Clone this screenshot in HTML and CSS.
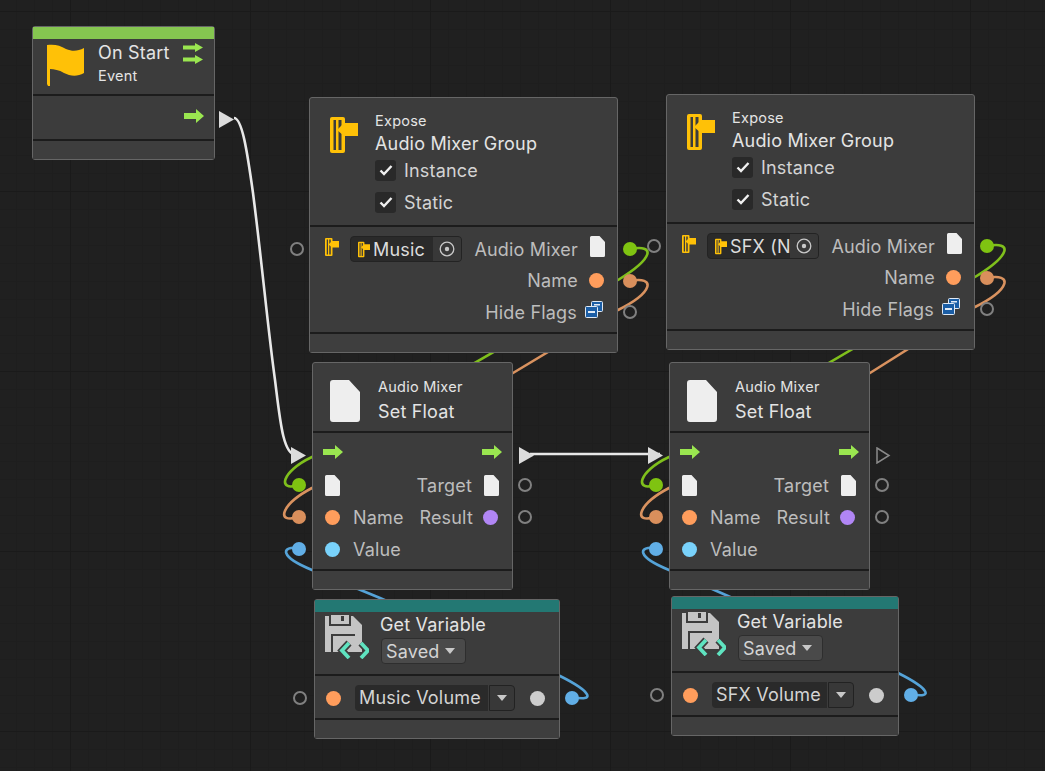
FILE: index.html
```html
<!DOCTYPE html>
<html lang="en">
<head>
    <meta charset="UTF-8">
    <meta name="viewport" content="width=device-width, initial-scale=1.0">
    <title>Script Graph</title>
    <link rel="stylesheet" href="styles.css">
</head>
<body>
    <svg class="icon-defs" width="0" height="0">
        <symbol id="i-flow" viewBox="0 0 20 14" preserveAspectRatio="none">
            <polygon points="0,4 12,4 12,0 20,7 12,14 12,10 0,10" fill="#9ae650"/>
        </symbol>
        <symbol id="i-doc" viewBox="0 0 15 21">
            <path d="M1.5 0H9.5L15 6V19.5A1.5 1.5 0 0 1 13.5 21H1.5A1.5 1.5 0 0 1 0 19.5V1.5A1.5 1.5 0 0 1 1.5 0Z" fill="#eeeeee"/>
        </symbol>
        <symbol id="i-flag" viewBox="0 0 40 44">
            <path d="M1 1C8 0 14 1 20 5C27 8 32 7 38 4V29C31 33 24 32 18 29C13 26 8 25 4 25V42H2L1 40Z" fill="#ffc107"/>
        </symbol>
        <symbol id="i-group" viewBox="0 0 28 36">
            <rect x="0" y="0" width="15" height="36" rx="2" fill="#ffc107"/>
            <rect x="3.5" y="3" width="2.5" height="30" fill="#3c3c3c"/>
            <rect x="8.5" y="3" width="3" height="30" fill="#3c3c3c"/>
            <polygon points="7,13 14,6 28,6 28,19 14,19" fill="#ffc107"/>
        </symbol>
        <symbol id="i-target" viewBox="0 0 16 16">
            <circle cx="8" cy="8" r="6.8" fill="none" stroke="#c8c8c8" stroke-width="1.3"/>
            <circle cx="8" cy="8" r="2.2" fill="#c8c8c8"/>
        </symbol>
        <symbol id="i-check" viewBox="0 0 14 12">
            <path d="M1.5 6.5L5 10L12.5 2" fill="none" stroke="#f0f0f0" stroke-width="2.4"/>
        </symbol>
        <symbol id="i-flags" viewBox="0 0 18 17">
            <rect x="6.5" y="0.5" width="11" height="10" rx="1" fill="#1b5ea6" stroke="#dfe9f5"/>
            <rect x="9" y="3" width="6" height="1.5" fill="#dfe9f5"/>
            <rect x="0.5" y="5.5" width="12" height="11" rx="1" fill="#1b5ea6" stroke="#dfe9f5"/>
            <rect x="3" y="10" width="7" height="2" fill="#dfe9f5"/>
        </symbol>
        <symbol id="i-save" viewBox="0 0 44 44">
            <path d="M0 1H28L37 10V37H0Z" fill="#c4c4c4"/>
            <rect x="4" y="0" width="22" height="11" fill="#3c3c3c"/>
            <rect x="6" y="0" width="18" height="9" fill="#c4c4c4"/>
            <rect x="16" y="1" width="3" height="5" fill="#3c3c3c"/>
            <rect x="6" y="19" width="24" height="18" fill="#3c3c3c"/>
            <rect x="8" y="21" width="22" height="16" fill="#c4c4c4"/>
            <path d="M24 28L17 35.5L24 43M36 28L43 35.5L36 43" fill="none" stroke="#3c3c3c" stroke-width="7"/>
            <path d="M24 28L17 35.5L24 43M36 28L43 35.5L36 43" fill="none" stroke="#5fe3c0" stroke-width="3.8"/>
        </symbol>
        <symbol id="i-tri" viewBox="0 0 15 17">
            <polygon points="0,0 15,8.5 0,17" fill="#dcdcdc"/>
        </symbol>
        <symbol id="i-tri-open" viewBox="0 0 15 17">
            <polygon points="1,1 13,8.5 1,16" fill="none" stroke="#8a8a8a" stroke-width="1.5"/>
        </symbol>
    </svg>

    <div class="canvas">
        <!-- connections, drawn under the nodes -->
        <svg class="wires" width="1045" height="771">
            <g class="wire-flow">
                <path d="M234 118C242 118 247 150 253 193C262 263 268 330 275 380C280 420 283 455 296 455"/>
                <path d="M530 454H660"/>
            </g>
            <g class="wire-green">
                <path d="M630 249C656 244 654 258 618 280L312 457C280 472 278 492 298 485"/>
                <path d="M987 246C1013 241 1011 255 975 277L669 457C637 472 635 492 655 485"/>
            </g>
            <g class="wire-orange">
                <path d="M630 281C656 276 654 292 618 310L513 373L312 488C280 505 276 524 298 517"/>
                <path d="M987 278C1013 273 1011 289 975 307L870 373L669 488C637 505 633 524 655 517"/>
            </g>
            <g class="wire-blue">
                <path d="M298 548C282 546 278 556 312 570L380 598L560 676C592 692 596 702 572 697"/>
                <path d="M655 548C639 546 635 556 669 570L728 596L898 673C930 689 934 699 911 694"/>
            </g>
        </svg>

        <!-- On Start -->
        <div class="node node-start">
            <div class="strip strip-green"></div>
            <div class="head head-start">
                <svg class="ic-flag"><use href="#i-flag"/></svg>
                <div class="head-text">
                    <div class="head-name name-start">On Start</div>
                    <div class="head-sub">Event</div>
                </div>
                <div class="start-arrows">
                    <svg class="ic-flow-sm"><use href="#i-flow"/></svg>
                    <svg class="ic-flow-sm"><use href="#i-flow"/></svg>
                </div>
            </div>
            <div class="body body-start">
                <div class="row">
                    <svg class="ic-flow push"><use href="#i-flow"/></svg>
                    <svg class="port-flow out-start"><use href="#i-tri"/></svg>
                </div>
            </div>
            <div class="foot"></div>
        </div>

        <!-- Expose: Music -->
        <div class="node node-expose node-expose-a">
            <div class="head head-expose">
                <svg class="ic-group"><use href="#i-group"/></svg>
                <div class="head-text">
                    <div class="head-sub">Expose</div>
                    <div class="head-name">Audio Mixer Group</div>
                    <div class="check"><span class="check-box"><svg class="ic-check"><use href="#i-check"/></svg></span>Instance</div>
                    <div class="check"><span class="check-box"><svg class="ic-check"><use href="#i-check"/></svg></span>Static</div>
                </div>
            </div>
            <div class="body body-expose">
                <div class="row row-expose">
                    <span class="port port-open in-expose"></span>
                    <svg class="ic-group-sm"><use href="#i-group"/></svg>
                    <div class="field-object">
                        <svg class="ic-group-xs"><use href="#i-group"/></svg>
                        <span class="field-label">Music</span>
                        <span class="field-target"><svg class="ic-target"><use href="#i-target"/></svg></span>
                    </div>
                    <span class="label push">Audio Mixer</span>
                    <svg class="ic-doc ic-doc-raised"><use href="#i-doc"/></svg>
                    <span class="port port-green out-expose"></span>
                </div>
                <div class="row row-expose">
                    <span class="label push">Name</span>
                    <span class="dot dot-orange"></span>
                    <span class="port port-orange out-expose"></span>
                </div>
                <div class="row row-expose">
                    <span class="label push">Hide Flags</span>
                    <svg class="ic-flags"><use href="#i-flags"/></svg>
                    <span class="port port-open out-expose"></span>
                </div>
            </div>
            <div class="foot"></div>
        </div>

        <!-- Expose: SFX -->
        <div class="node node-expose node-expose-b">
            <div class="head head-expose">
                <svg class="ic-group"><use href="#i-group"/></svg>
                <div class="head-text">
                    <div class="head-sub">Expose</div>
                    <div class="head-name">Audio Mixer Group</div>
                    <div class="check"><span class="check-box"><svg class="ic-check"><use href="#i-check"/></svg></span>Instance</div>
                    <div class="check"><span class="check-box"><svg class="ic-check"><use href="#i-check"/></svg></span>Static</div>
                </div>
            </div>
            <div class="body body-expose">
                <div class="row row-expose">
                    <span class="port port-open in-expose"></span>
                    <svg class="ic-group-sm"><use href="#i-group"/></svg>
                    <div class="field-object">
                        <svg class="ic-group-xs"><use href="#i-group"/></svg>
                        <span class="field-label">SFX (N</span>
                        <span class="field-target"><svg class="ic-target"><use href="#i-target"/></svg></span>
                    </div>
                    <span class="label push">Audio Mixer</span>
                    <svg class="ic-doc ic-doc-raised"><use href="#i-doc"/></svg>
                    <span class="port port-green out-expose"></span>
                </div>
                <div class="row row-expose">
                    <span class="label push">Name</span>
                    <span class="dot dot-orange"></span>
                    <span class="port port-orange out-expose"></span>
                </div>
                <div class="row row-expose">
                    <span class="label push">Hide Flags</span>
                    <svg class="ic-flags"><use href="#i-flags"/></svg>
                    <span class="port port-open out-expose"></span>
                </div>
            </div>
            <div class="foot"></div>
        </div>

        <!-- Set Float 1 -->
        <div class="node node-set node-set-a">
            <div class="head head-set">
                <svg class="ic-doc-lg"><use href="#i-doc"/></svg>
                <div class="head-text">
                    <div class="head-sub">Audio Mixer</div>
                    <div class="head-name">Set Float</div>
                </div>
            </div>
            <div class="body body-set">
                <div class="row">
                    <svg class="port-flow in-set"><use href="#i-tri"/></svg>
                    <svg class="ic-flow"><use href="#i-flow"/></svg>
                    <svg class="ic-flow push"><use href="#i-flow"/></svg>
                    <svg class="port-flow out-set"><use href="#i-tri"/></svg>
                </div>
                <div class="row">
                    <span class="port port-green in-set-dot"></span>
                    <svg class="ic-doc slot"><use href="#i-doc"/></svg>
                    <span class="label push">Target</span>
                    <svg class="ic-doc slot-r"><use href="#i-doc"/></svg>
                    <span class="port port-open out-set-dot"></span>
                </div>
                <div class="row">
                    <span class="port port-orange in-set-dot"></span>
                    <span class="dot dot-orange"></span>
                    <span class="label">Name</span>
                    <span class="label push">Result</span>
                    <span class="dot dot-purple"></span>
                    <span class="port port-open out-set-dot"></span>
                </div>
                <div class="row">
                    <span class="port port-blue in-set-dot"></span>
                    <span class="dot dot-blue"></span>
                    <span class="label">Value</span>
                </div>
            </div>
            <div class="foot"></div>
        </div>

        <!-- Set Float 2 -->
        <div class="node node-set node-set-b">
            <div class="head head-set">
                <svg class="ic-doc-lg"><use href="#i-doc"/></svg>
                <div class="head-text">
                    <div class="head-sub">Audio Mixer</div>
                    <div class="head-name">Set Float</div>
                </div>
            </div>
            <div class="body body-set">
                <div class="row">
                    <svg class="port-flow in-set"><use href="#i-tri"/></svg>
                    <svg class="ic-flow"><use href="#i-flow"/></svg>
                    <svg class="ic-flow push"><use href="#i-flow"/></svg>
                    <svg class="port-flow out-set"><use href="#i-tri-open"/></svg>
                </div>
                <div class="row">
                    <span class="port port-green in-set-dot"></span>
                    <svg class="ic-doc slot"><use href="#i-doc"/></svg>
                    <span class="label push">Target</span>
                    <svg class="ic-doc slot-r"><use href="#i-doc"/></svg>
                    <span class="port port-open out-set-dot"></span>
                </div>
                <div class="row">
                    <span class="port port-orange in-set-dot"></span>
                    <span class="dot dot-orange"></span>
                    <span class="label">Name</span>
                    <span class="label push">Result</span>
                    <span class="dot dot-purple"></span>
                    <span class="port port-open out-set-dot"></span>
                </div>
                <div class="row">
                    <span class="port port-blue in-set-dot"></span>
                    <span class="dot dot-blue"></span>
                    <span class="label">Value</span>
                </div>
            </div>
            <div class="foot"></div>
        </div>

        <!-- Get Variable: Music Volume -->
        <div class="node node-var node-var-a">
            <div class="strip strip-teal"></div>
            <div class="head head-var">
                <svg class="ic-save"><use href="#i-save"/></svg>
                <div class="head-text">
                    <div class="var-name">Get Variable</div>
                    <div class="drop">Saved<span class="caret"></span></div>
                </div>
            </div>
            <div class="body body-var">
                <div class="row">
                    <span class="port port-open in-var"></span>
                    <span class="dot dot-orange"></span>
                    <span class="var-field var-field-a">Music Volume</span>
                    <span class="var-btn"><span class="caret"></span></span>
                    <span class="dot dot-grey"></span>
                    <span class="port port-blue out-var"></span>
                </div>
            </div>
            <div class="foot"></div>
        </div>

        <!-- Get Variable: SFX Volume -->
        <div class="node node-var node-var-b">
            <div class="strip strip-teal"></div>
            <div class="head head-var">
                <svg class="ic-save"><use href="#i-save"/></svg>
                <div class="head-text">
                    <div class="var-name">Get Variable</div>
                    <div class="drop">Saved<span class="caret"></span></div>
                </div>
            </div>
            <div class="body body-var">
                <div class="row">
                    <span class="port port-open in-var"></span>
                    <span class="dot dot-orange"></span>
                    <span class="var-field var-field-b">SFX Volume</span>
                    <span class="var-btn"><span class="caret"></span></span>
                    <span class="dot dot-grey"></span>
                    <span class="port port-blue out-var"></span>
                </div>
            </div>
            <div class="foot"></div>
        </div>
    </div>
</body>
</html>
```

FILE: styles.css
```css
body {
    margin: 0;
    background-color: #202020;
    font-family: Inter, "Noto Sans", sans-serif;
    color: #e4e4e4;
    letter-spacing: 0.18px;
}
.icon-defs {
    position: absolute;
}
.canvas {
    position: relative;
    width: 1045px;
    height: 771px;
    overflow: hidden;
    background-color: #202020;
    background-image:
        linear-gradient(#1a1a1a 1px, transparent 1px),
        linear-gradient(90deg, #1a1a1a 1px, transparent 1px),
        linear-gradient(#1e1e1e 1px, transparent 1px),
        linear-gradient(90deg, #1e1e1e 1px, transparent 1px);
    background-size: 180px 180px, 180px 180px, 18px 18px, 18px 18px;
    background-position: 0 11px, 70px 0, 0 11px, 70px 0;
}
.wires {
    position: absolute;
    left: 0;
    top: 0;
}
.wires path {
    fill: none;
    stroke-width: 2.6;
}
.wire-flow path { stroke: #e8e8e8; }
.wire-green path { stroke: #7fbf1c; }
.wire-orange path { stroke: #d9925f; }
.wire-blue path { stroke: #55a3d8; }

/* nodes */
.node {
    position: absolute;
    box-sizing: border-box;
    display: flex;
    flex-direction: column;
    background-color: #3c3c3c;
    border: 1px solid #666;
    border-radius: 3px;
}
.node-start { left: 32px; top: 26px; width: 183px; height: 134px; }
.node-expose { width: 309px; height: 256px; }
.node-expose-a { left: 309px; top: 97px; }
.node-expose-b { left: 666px; top: 94px; }
.node-set { width: 201px; height: 228px; }
.node-set-a { left: 312px; top: 362px; }
.node-set-b { left: 669px; top: 362px; }
.node-var { height: 140px; }
.node-var-a { left: 314px; top: 599px; width: 246px; }
.node-var-b { left: 671px; top: 596px; width: 228px; }

.strip { height: 12px; }
.strip-green { background-color: #85c650; }
.strip-teal { background-color: #237873; }

.head {
    display: flex;
    box-sizing: border-box;
    border-bottom: 2px solid #1c1c1c;
}
.head-start { height: 57px; padding: 2px 11px 0 13px; }
.head-expose { height: 129px; padding: 14px 0 0 20px; }
.head-set { height: 70px; padding: 15px 0 0 17px; }
.head-var { height: 64px; padding: 2px 0 0 10px; }

.head-sub {
    font-size: 14.5px;
    line-height: 18px;
    letter-spacing: 0.25px;
}
.head-name {
    font-size: 18px;
    line-height: 24px;
}
.head-expose .head-name {
    margin: 2px 0 -2px;
}
.head-set .head-name {
    margin-top: 4px;
}
.head-text {
    display: flex;
    flex-direction: column;
}
.head-expose .head-text { margin-left: 17px; }
.head-set .head-text { margin-left: 18px; }
.head-start .head-text { margin-left: 12px; }
.head-var .head-text { margin-left: 11px; }

.name-start {
    margin-bottom: 2px;
}
.start-arrows {
    display: flex;
    flex-direction: column;
    gap: 3px;
    margin-left: auto;
    margin-top: 2px;
}
.var-name {
    font-size: 18px;
    line-height: 22px;
}

.check {
    display: flex;
    align-items: center;
    gap: 8px;
    height: 32px;
    font-size: 18px;
    color: #d4d4d4;
}
.check-box {
    display: flex;
    align-items: center;
    justify-content: center;
    width: 21px;
    height: 21px;
    background-color: #292929;
    border-radius: 3px;
}
.ic-check { width: 14px; height: 12px; }

.body {
    flex: 1;
    display: flex;
    flex-direction: column;
}
.body-start { padding: 0 10px 0 0; height: 43px; }
.body-start .row { height: 41px; }
.body-start .ic-flow { margin-bottom: 2px; }
.body-expose { padding: 6.5px 12px 0 15px; }
.body-set { padding: 4px 10px 0 10px; }
.body-set .ic-flow { margin-bottom: 2px; }
.body-var { padding: 6px 22px 0 11px; }

.foot {
    box-sizing: border-box;
    height: 20px;
    border-top: 2px solid #1c1c1c;
    background-color: #3e3e3e;
}

.row {
    position: relative;
    display: flex;
    align-items: center;
    height: 32px;
}
.row > * {
    flex: none;
}
.row-expose {
    height: 31.5px;
}
.push {
    margin-left: auto;
}
.label {
    font-size: 18px;
    color: #bdbdbd;
}
.node-set .row .label:not(.push) {
    margin-left: 13px;
}

/* icons */
.ic-flow { width: 20px; height: 14px; }
.ic-flow-sm { width: 20px; height: 9px; }
.ic-flag { width: 40px; height: 44px; margin-top: 3px; }
.ic-group { width: 28px; height: 36px; margin-top: 5px; }
.ic-group-sm { width: 14px; height: 18px; margin-bottom: 5px; }
.ic-group-xs { width: 12px; height: 17px; flex: none; }
.ic-doc { width: 15px; height: 21px; margin-left: 12px; }
.ic-doc-raised { margin-bottom: 6px; }
.ic-doc.slot { margin-left: 2px; }
.ic-doc.slot-r { margin-right: 3px; }
.ic-doc-lg { width: 30px; height: 42px; margin-top: 2px; }
.ic-flags { width: 18px; height: 17px; margin-left: 8px; margin-right: 2px; margin-bottom: 6px; }
.ic-save { width: 44px; height: 44px; flex: none; margin-top: 1px; }
.ic-target { width: 16px; height: 16px; }

/* inline fields */
.field-object {
    display: flex;
    align-items: center;
    box-sizing: border-box;
    width: 112px;
    height: 26px;
    margin-left: 11px;
    padding-left: 7px;
    background-color: #2a2a2a;
    border: 1px solid #232323;
    border-radius: 4px;
    font-size: 18px;
    color: #dcdcdc;
    overflow: hidden;
}
.field-label {
    flex: 1;
    margin-left: 3px;
    white-space: nowrap;
    overflow: hidden;
}
.field-target {
    display: flex;
    align-items: center;
    justify-content: center;
    width: 28px;
    height: 100%;
    padding-right: 1px;
    box-sizing: border-box;
    background-color: #383838;
}
.drop {
    display: flex;
    align-items: center;
    gap: 5px;
    box-sizing: border-box;
    width: 85px;
    height: 26px;
    margin-top: 2px;
    margin-left: 1px;
    padding-left: 4px;
    background-color: #4a4a4a;
    border: 1px solid #2e2e2e;
    border-radius: 4px;
    font-size: 18px;
    color: #d4d4d4;
}
.caret {
    width: 0;
    height: 0;
    border-left: 5px solid transparent;
    border-right: 5px solid transparent;
    border-top: 6px solid #c8c8c8;
}
.var-field {
    box-sizing: border-box;
    height: 26px;
    margin-left: 14px;
    padding-left: 4px;
    background-color: #2a2a2a;
    border-radius: 4px 0 0 4px;
    font-size: 18px;
    line-height: 26px;
    color: #d4d4d4;
    white-space: nowrap;
}
.var-field-a { width: 133px; }
.var-field-b { width: 115px; }
.var-btn {
    display: flex;
    align-items: center;
    justify-content: center;
    box-sizing: border-box;
    width: 26px;
    height: 26px;
    margin-left: 1px;
    background-color: #383838;
    border: 1px solid #222;
    border-radius: 0 4px 4px 0;
}

/* port dots */
.dot {
    display: block;
    width: 15px;
    height: 15px;
    border-radius: 50%;
}
.dot-orange { background-color: #ff9d5c; }
.dot-purple { background-color: #b186f5; margin-left: 10px; margin-right: 4px; }
.dot-blue { background-color: #79d2fb; }
.dot-grey { background-color: #cccccc; margin-left: 15px; }
.body-expose .dot { margin-left: 11px; margin-right: 1px; }
.body-set .dot-orange, .body-set .dot-blue { margin-left: 2px; }

/* ports that sit outside the node */
.port {
    position: absolute;
    box-sizing: border-box;
    width: 14px;
    height: 14px;
    border-radius: 50%;
}
.port-open { background: transparent; border: 2px solid #808080; }
.port-green { background-color: #7fc311; }
.port-orange { background-color: #d98f5c; }
.port-blue { background-color: #61aee6; }
.port-flow {
    position: absolute;
    width: 15px;
    height: 17px;
}
.in-expose { left: -35px; }
.out-expose { right: -32px; }
.in-set-dot { left: -31px; }
.out-set-dot { right: -30px; }
.in-set { left: -32px; top: 9.5px; }
.out-set { right: -32px; top: 9.5px; }
.out-start { right: -30px; top: 15px; }
.in-var { left: -33px; }
.out-var { right: -42px; }
```
